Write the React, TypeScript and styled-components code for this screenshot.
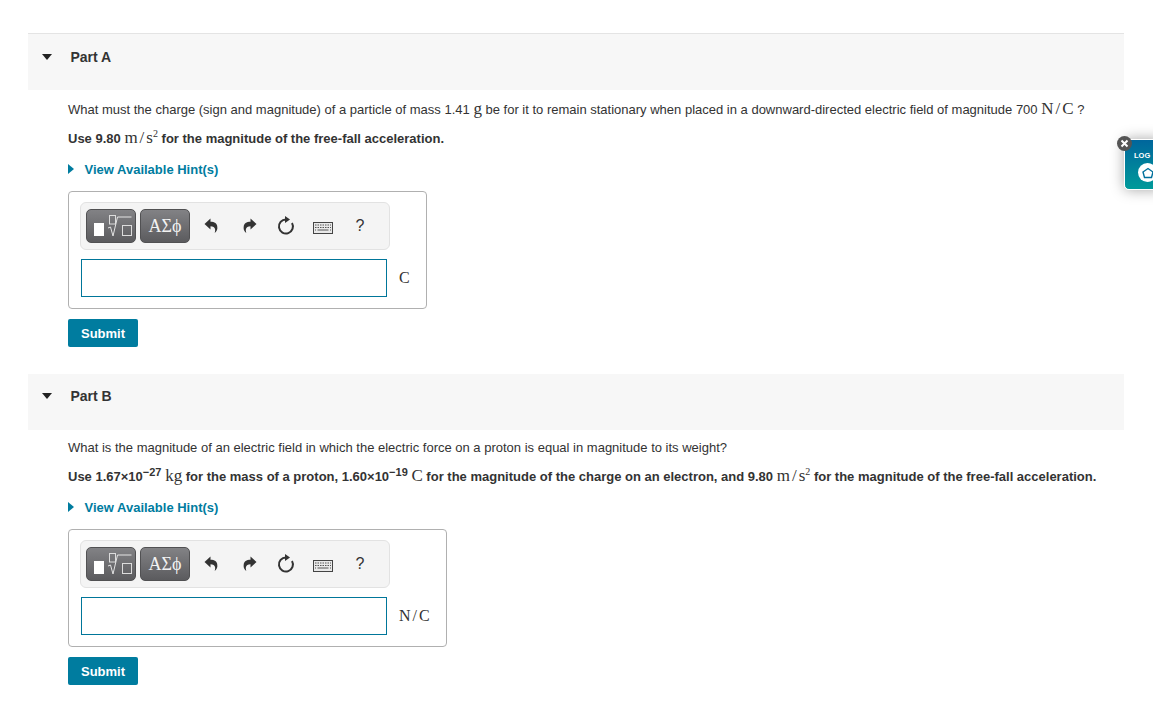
import styled, { createGlobalStyle } from 'styled-components';

const GlobalStyle = createGlobalStyle`
  html, body {
    margin: 0;
    padding: 0;
    background: #fff;
    overflow: hidden;
  }
  body {
    font-family: "Liberation Sans", Arial, sans-serif;
    color: #333;
  }
`;

const Page = styled.main`
  position: relative;
  width: 1153px;
  height: 704px;
  padding: 33px 29px 0 28px;
  box-sizing: border-box;
  overflow: hidden;
`;

const PartSection = styled.section<{ $first?: boolean }>`
  margin-top: ${(p) => (p.$first ? '0' : '27px')};
  border-top: ${(p) => (p.$first ? '1px solid #e4e4e4' : '0')};
`;

const PartHeader = styled.header<{ $compact?: boolean }>`
  display: flex;
  align-items: flex-start;
  height: 56px;
  padding: ${(p) => (p.$compact ? '14px' : '15px')} 0 0 14px;
  box-sizing: border-box;
  background: #f7f7f7;
`;

const Caret = styled.span`
  width: 0;
  height: 0;
  margin-top: 5px;
  border-left: 5px solid transparent;
  border-right: 5px solid transparent;
  border-top: 6px solid #222;
`;

const PartTitle = styled.h2`
  margin: 0 0 0 18.5px;
  font-size: 14px;
  line-height: 16px;
  font-weight: 700;
  color: #333;
`;

const PartBody = styled.div`
  padding: 3px 0 0 40px;
`;

const Paragraph = styled.p<{ $bold?: boolean; $tall?: boolean }>`
  height: 29px;
  margin: ${(p) => (p.$tall ? '2px 0 0' : '0')};
  white-space: pre;
  font-size: 13px;
  line-height: 29px;
  font-weight: ${(p) => (p.$bold ? 700 : 400)};
  color: #333;
`;

const MathText = styled.span`
  font-family: "Liberation Serif", "Times New Roman", serif;
  font-weight: 400;
  font-size: 17px;
  line-height: 0;
`;

const Slash = styled.span`
  margin: 0 2px;
`;

const Sup = styled.sup`
  font-size: 10px;
  line-height: 0;
  vertical-align: 6px;
`;

const NumSup = styled.sup`
  font-size: 11px;
  line-height: 0;
  vertical-align: 5px;
`;

const HintLink = styled.a`
  display: flex;
  align-items: center;
  gap: 10.5px;
  height: 20px;
  margin-top: 6px;
  font-size: 13px;
  font-weight: 700;
  color: #007c9f;
`;

const HintCaret = styled.span`
  width: 0;
  height: 0;
  border-top: 5.5px solid transparent;
  border-bottom: 5.5px solid transparent;
  border-left: 6px solid #007c9f;
`;

const AnswerBox = styled.div<{ $width: number }>`
  width: ${(p) => p.$width}px;
  height: 118px;
  margin-top: 12px;
  padding: 10px 11px;
  box-sizing: border-box;
  border: 1px solid #b0b0b0;
  border-radius: 4px;
`;

const Toolbar = styled.div`
  display: flex;
  align-items: center;
  width: 310px;
  height: 48px;
  padding-left: 5px;
  box-sizing: border-box;
  background: #f4f4f4;
  border: 1px solid #e2e2e2;
  border-radius: 6px;
`;

const TemplateButton = styled.div`
  display: flex;
  align-items: center;
  justify-content: center;
  width: 50px;
  height: 34px;
  margin-right: 4px;
  box-sizing: border-box;
  background: linear-gradient(#828285, #5b5b5e);
  border: 1px solid #515153;
  border-radius: 5px;
  font-family: "Liberation Serif", serif;
  font-size: 18px;
  color: #f2f2f2;
`;

const ToolIcon = styled.span<{ $width: number }>`
  display: flex;
  align-items: center;
  justify-content: center;
  width: ${(p) => p.$width}px;
  height: 34px;
  font-family: "Liberation Sans", sans-serif;
  font-size: 16px;
  color: #333;
`;

const AnswerRow = styled.div`
  display: flex;
  align-items: center;
  margin-top: 9px;
`;

const AnswerInput = styled.div`
  width: 306px;
  height: 38px;
  margin-left: 1px;
  box-sizing: border-box;
  background: #fff;
  border: 1px solid #00769a;
`;

const Unit = styled.span`
  margin-left: 12px;
  font-family: "Liberation Serif", serif;
  font-size: 16px;
  color: #333;
`;

const UnitSlash = styled.span`
  margin: 0 2px;
`;

const SubmitButton = styled.button`
  display: block;
  width: 70px;
  height: 28px;
  margin-top: 10px;
  padding: 0;
  border: 0;
  border-radius: 2px;
  background: #007c9f;
  color: #fff;
  font-family: "Liberation Sans", Arial, sans-serif;
  font-size: 13px;
  font-weight: 700;
`;

const FloatingTab = styled.aside`
  position: absolute;
  top: 139px;
  left: 1124px;
  width: 40px;
  height: 51px;
  padding: 11px 0 0 9px;
  box-sizing: border-box;
  border: 1px solid #fff;
  border-radius: 5px;
  background: linear-gradient(#00669c, #009a9a);
  box-shadow: 0 0 14px rgba(0, 0, 0, 0.35);
  color: #fff;
  font-size: 7.5px;
  font-weight: 700;
`;

const HomeBadge = styled.span`
  display: flex;
  align-items: center;
  justify-content: center;
  width: 19px;
  height: 19px;
  margin: 3px 0 0 4px;
  border-radius: 50%;
  background: #fff;
`;

const CloseBadge = styled.span`
  position: absolute;
  top: 136px;
  left: 1117px;
  display: flex;
  align-items: center;
  justify-content: center;
  width: 15px;
  height: 15px;
  border-radius: 50%;
  background: #555;
`;

const TemplateIcon = () => (
  <svg width="48" height="32" viewBox="1 1 48 32" fill="none">
    <rect x="8" y="14" width="10" height="13" fill="#fff" />
    <rect x="23.5" y="6.5" width="6" height="8.5" stroke="#dcdcdc" />
    <path d="M22 19l2.5-1 2.5 9 4.5-19h14" stroke="#e4e4e4" />
    <rect x="36.5" y="16.5" width="9" height="10" stroke="#dcdcdc" />
  </svg>
);

const UndoIcon = ({ flip }: { flip?: boolean }) => (
  <svg width="14" height="16" viewBox="0 0 14 16" style={flip ? { transform: 'scaleX(-1)' } : undefined}>
    <path d="M6.5 .5L.5 6l6 5.5V8.3c2.5 0 4.3 1 4.6 3 .2 1.200 0 2.400-.4 3.700 2-1.500 3-3.600 2.600-6C13.300 5.600 10.500 3.800 6.500 3.800z" fill="#333" />
  </svg>
);

const ReloadIcon = () => (
  <svg width="18" height="20" viewBox="0 0 18 20" fill="none">
    <path d="M9 3.5a7 7 0 1 0 6 3.5" stroke="#333" strokeWidth="2" />
    <path d="M8 0l5 3.5L8 7z" fill="#333" />
  </svg>
);

const KeyboardIcon = () => (
  <svg width="20" height="12" viewBox="0 0 20 12" fill="none" style={{ marginTop: 3 }}>
    <rect x=".5" y=".5" width="19" height="11" fill="#e9e9e9" stroke="#444" />
    <path d="M2 3h16M2 5.5h16" stroke="#555" strokeDasharray="1.5 1" />
    <path d="M2 8h1M4.500 8h11M17 8h1" stroke="#555" />
  </svg>
);

const Tools = ({ unit, width }: { unit: React.ReactNode; width: number }) => (
  <AnswerBox $width={width}>
    <Toolbar>
      <TemplateButton><TemplateIcon /></TemplateButton>
      <TemplateButton>ΑΣϕ</TemplateButton>
      <ToolIcon $width={34}><UndoIcon /></ToolIcon>
      <ToolIcon $width={44}><UndoIcon flip /></ToolIcon>
      <ToolIcon $width={28}><ReloadIcon /></ToolIcon>
      <ToolIcon $width={46}><KeyboardIcon /></ToolIcon>
      <ToolIcon $width={28}>?</ToolIcon>
    </Toolbar>
    <AnswerRow>
      <AnswerInput />
      <Unit>{unit}</Unit>
    </AnswerRow>
  </AnswerBox>
);

const Hint = () => (
  <HintLink>
    <HintCaret />
    View Available Hint(s)
  </HintLink>
);

export default function App() {
  return (
    <>
      <GlobalStyle />
      <Page>
        <PartSection $first>
          <PartHeader>
            <Caret />
            <PartTitle>Part A</PartTitle>
          </PartHeader>
          <PartBody>
            <Paragraph $tall>
              What must the charge (sign and magnitude) of a particle of mass 1.41 <MathText>g</MathText> be for it to remain stationary when placed in a downward-directed electric field of magnitude 700 <MathText>N<Slash>/</Slash>C</MathText> ?
            </Paragraph>
            <Paragraph $bold>
              Use 9.80 <MathText>m<Slash>/</Slash>s<Sup>2</Sup></MathText> for the magnitude of the free-fall acceleration.
            </Paragraph>
            <Hint />
            <Tools unit="C" width={359} />
            <SubmitButton>Submit</SubmitButton>
          </PartBody>
        </PartSection>
        <PartSection>
          <PartHeader $compact>
            <Caret />
            <PartTitle>Part B</PartTitle>
          </PartHeader>
          <PartBody>
            <Paragraph>What is the magnitude of an electric field in which the electric force on a proton is equal in magnitude to its weight?</Paragraph>
            <Paragraph $bold>
              Use 1.67×10<NumSup>−27</NumSup> <MathText>kg</MathText> for the mass of a proton, 1.60×10<NumSup>−19</NumSup> <MathText>C</MathText> for the magnitude of the charge on an electron, and 9.80 <MathText>m<Slash>/</Slash>s<Sup>2</Sup></MathText> for the magnitude of the free-fall acceleration.
            </Paragraph>
            <Hint />
            <Tools unit={<>N<UnitSlash>/</UnitSlash>C</>} width={379} />
            <SubmitButton>Submit</SubmitButton>
          </PartBody>
        </PartSection>
        <FloatingTab>
          LOG
          <HomeBadge>
            <svg width="12" height="12" viewBox="0 0 12 12" fill="none">
              <path d="M1 5L6 1.5 11 5l-1.5 5.500h-7z" stroke="#00709c" strokeWidth="1.4" />
            </svg>
          </HomeBadge>
        </FloatingTab>
        <CloseBadge>
          <svg width="9" height="9" viewBox="0 0 9 9">
            <path d="M1.5 1.5l6 6M7.5 1.5l-6 6" stroke="#fff" strokeWidth="2" />
          </svg>
        </CloseBadge>
      </Page>
    </>
  );
}
